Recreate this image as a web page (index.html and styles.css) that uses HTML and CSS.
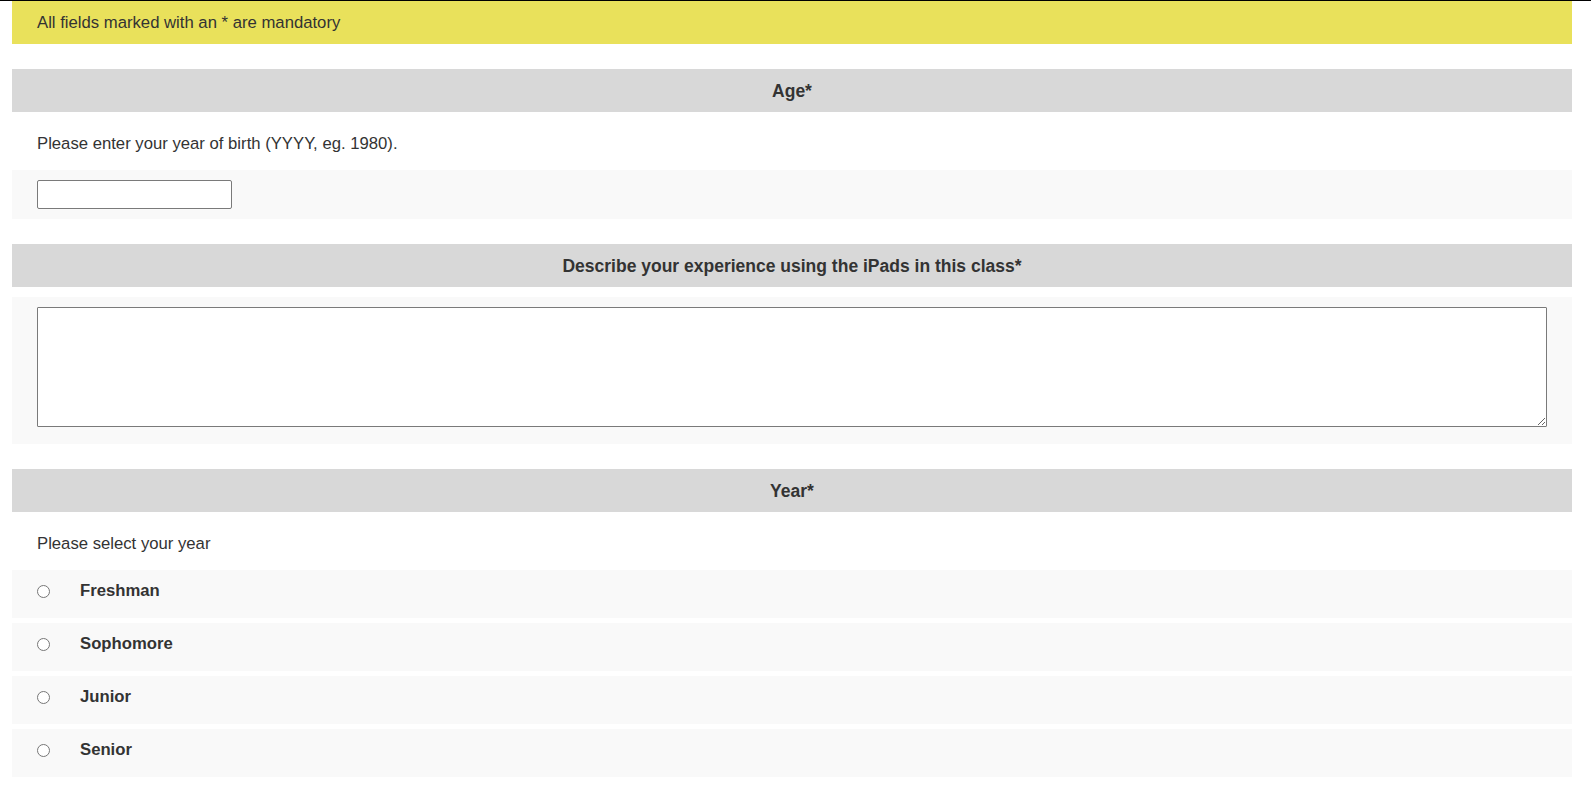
FILE: index.html
```html
<!DOCTYPE html>
<html lang="en">
<head>
<meta charset="utf-8">
<title>Survey</title>
<link rel="stylesheet" href="styles.css">
</head>
<body>
<form class="survey">
  <div class="notice">All fields marked with an * are mandatory</div>

  <section class="question">
    <h2 class="q-title">Age*</h2>
    <p class="q-desc">Please enter your year of birth (YYYY, eg. 1980).</p>
    <div class="answer">
      <input class="text-input" type="text">
    </div>
  </section>

  <section class="question">
    <h2 class="q-title">Describe your experience using the iPads in this class*</h2>
    <div class="answer answer-area">
      <textarea class="textarea"></textarea>
    </div>
  </section>

  <section class="question">
    <h2 class="q-title">Year*</h2>
    <p class="q-desc">Please select your year</p>
    <div class="options">
      <label class="option"><input class="radio" type="radio" name="year"><span class="opt-label">Freshman</span></label>
      <label class="option"><input class="radio" type="radio" name="year"><span class="opt-label">Sophomore</span></label>
      <label class="option"><input class="radio" type="radio" name="year"><span class="opt-label">Junior</span></label>
      <label class="option"><input class="radio" type="radio" name="year"><span class="opt-label">Senior</span></label>
    </div>
  </section>
</form>
</body>
</html>
```

FILE: styles.css
```css
html, body {
  margin: 0;
  padding: 0;
  background: #ffffff;
}
body {
  border-top: 1px solid #000000;
  font-family: "Liberation Sans", Arial, Helvetica, sans-serif;
  font-size: 16.7px;
  color: #333333;
}
.survey {
  width: 1560px;
  margin: 0 0 0 12px;
  display: flex;
  flex-direction: column;
  gap: 25px;
}
.notice {
  height: 43px;
  background: #e9e15b;
  padding: 0 25px;
  display: flex;
  align-items: center;
  box-sizing: border-box;
}
.question {
  display: flex;
  flex-direction: column;
}
.q-title {
  margin: 0;
  height: 43px;
  background: #d8d8d8;
  font-size: 17.5px;
  font-weight: bold;
  display: flex;
  align-items: center;
  justify-content: center;
  padding-top: 1px;
  box-sizing: border-box;
}
.q-desc {
  margin: 0;
  height: 58px;
  box-sizing: border-box;
  padding: 5px 25px 0;
  display: flex;
  align-items: center;
}
.answer {
  background: #f9f9f9;
  padding: 10px 25px;
  display: flex;
}
.answer-area {
  margin-top: 10px;
  padding: 10px 25px 17px;
}
.text-input {
  width: 195px;
  height: 29px;
  box-sizing: border-box;
  border: 1px solid #7a7a7a;
  border-radius: 2px;
  background: #ffffff;
  margin: 0;
}
.textarea {
  width: 1510px;
  height: 120px;
  box-sizing: border-box;
  border: 1px solid #7a7a7a;
  border-radius: 1px;
  background: #ffffff;
  margin: 0;
  resize: both;
}
.options {
  display: flex;
  flex-direction: column;
  gap: 5px;
}
.option {
  height: 48px;
  box-sizing: border-box;
  background: #f9f9f9;
  display: flex;
  align-items: center;
  padding: 0 25px 6px;
}
.radio {
  width: 13px;
  height: 13px;
  margin: 0;
  flex: none;
}
.opt-label {
  margin-left: 30px;
  font-weight: bold;
}
```
